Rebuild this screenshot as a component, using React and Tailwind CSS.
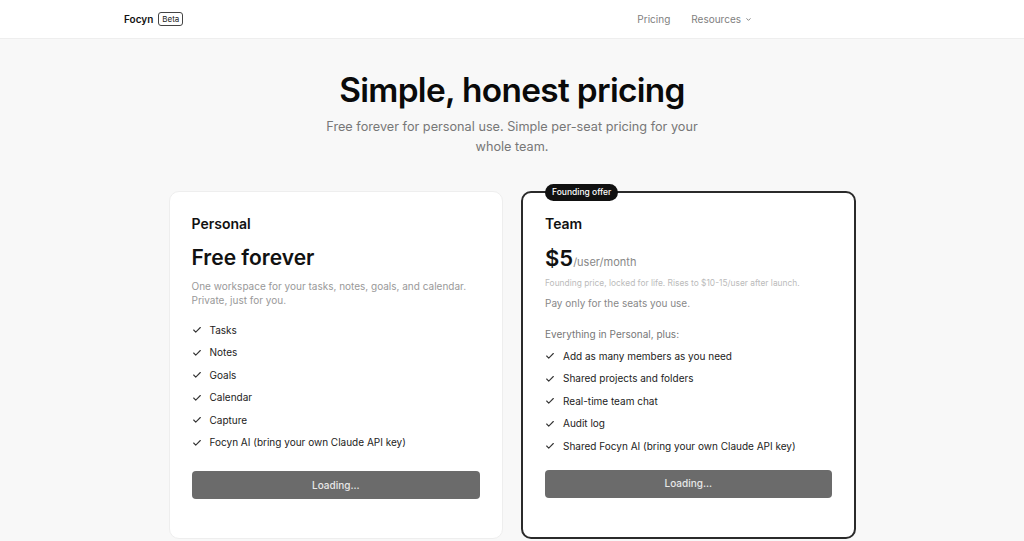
import React from "react";

const Check = () => (
  <svg width="10" height="10" viewBox="0 0 24 24" fill="none" stroke="#333" strokeWidth="2.6" strokeLinecap="round" strokeLinejoin="round" className="shrink-0">
    <path d="M20 6 9 17l-5-5" />
  </svg>
);

const Item = ({ children }) => (
  <li className="flex items-center gap-[8px] h-[22.5px] text-[10px] text-[#222]">
    <span className="w-[10px] flex justify-center"><Check /></span>
    <span>{children}</span>
  </li>
);

export default function App() {
  const personal = ["Tasks", "Notes", "Goals", "Calendar", "Capture", "Focyn AI (bring your own Claude API key)"];
  const team = [
    "Add as many members as you need",
    "Shared projects and folders",
    "Real-time team chat",
    "Audit log",
    "Shared Focyn AI (bring your own Claude API key)",
  ];
  return (
    <div className="min-h-[541px] bg-[#f8f8f8] font-['Inter',sans-serif] antialiased">
      <header className="h-[39px] bg-white border-b border-[#eeeeee] flex items-center justify-between pl-[124px] pr-[272px]">
        <div className="flex items-center gap-[5px]">
          <span className="text-[10px] font-semibold text-[#111]">Focyn</span>
          <span className="text-[8px] leading-none text-[#222] border border-[#444] rounded-[3px] px-[3px] py-[2px]">Beta</span>
        </div>
        <nav className="flex items-center gap-[21px] text-[10px] text-[#808080]">
          <span>Pricing</span>
          <span className="flex items-center gap-[4px]">
            Resources
            <svg width="7" height="7" viewBox="0 0 24 24" fill="none" stroke="#777" strokeWidth="3" strokeLinecap="round" strokeLinejoin="round">
              <path d="m6 9 6 6 6-6" />
            </svg>
          </span>
        </nav>
      </header>

      <main className="flex flex-col items-center">
        <h1 className="mt-[30px] text-[33.4px] leading-[42px] font-semibold tracking-[-0.02em] text-[#0a0a0a]">Simple, honest pricing</h1>
        <p className="mt-[6px] w-[390px] text-center text-[12.7px] leading-[20px] text-[#777]">
          Free forever for personal use. Simple per-seat pricing for your whole team.
        </p>

        <div className="mt-[34px] grid grid-cols-2 gap-[18px] w-[687px]">
          <div className="bg-white border border-[#eeeeee] rounded-[10px] px-[22px] pt-[23px] pb-[37px] flex flex-col">
            <div className="text-[14px] font-semibold text-[#111] leading-[18px]">Personal</div>
            <div className="mt-[12px] text-[21px] font-semibold text-[#111] leading-[26px]">Free forever</div>
            <p className="mt-[8px] text-[10px] leading-[14px] text-[#999]">
              One workspace for your tasks, notes, goals, and calendar.<br />Private, just for you.
            </p>
            <ul className="mt-[12px]">
              {personal.map((p) => <Item key={p}>{p}</Item>)}
            </ul>
            <div className="mt-[17px] h-[28px] rounded-[4px] bg-[#6b6b6b] flex items-center justify-center text-[10px] font-medium text-[#e8e8e8]">
              Loading...
            </div>
          </div>

          <div className="relative bg-white border-2 border-[#2a2a2a] rounded-[10px] px-[22px] pt-[22px] pb-[39px] flex flex-col">
            <span className="absolute -top-[9px] left-[22px] bg-[#111] text-white text-[8.5px] leading-none font-medium rounded-full px-[7px] py-[4px]">Founding offer</span>
            <div className="text-[14px] font-semibold text-[#111] leading-[18px]">Team</div>
            <div className="mt-[11px] flex items-baseline leading-[28px]">
              <span className="text-[22px] font-semibold text-[#111]">$5</span>
              <span className="text-[11px] text-[#888]">/user/month</span>
            </div>
            <p className="mt-[1px] text-[8.4px] leading-[12px] text-[#bbb]">Founding price, locked for life. Rises to $10-15/user after launch.</p>
            <p className="mt-[7px] text-[10px] leading-[14px] text-[#888]">Pay only for the seats you use.</p>
            <p className="mt-[17px] text-[10px] leading-[14px] text-[#777]">Everything in Personal, plus:</p>
            <ul className="mt-[4px]">
              {team.map((p) => <Item key={p}>{p}</Item>)}
            </ul>
            <div className="mt-[12px] h-[28px] rounded-[4px] bg-[#6b6b6b] flex items-center justify-center text-[10px] font-medium text-[#e8e8e8]">
              Loading...
            </div>
          </div>
        </div>
      </main>
    </div>
  );
}
